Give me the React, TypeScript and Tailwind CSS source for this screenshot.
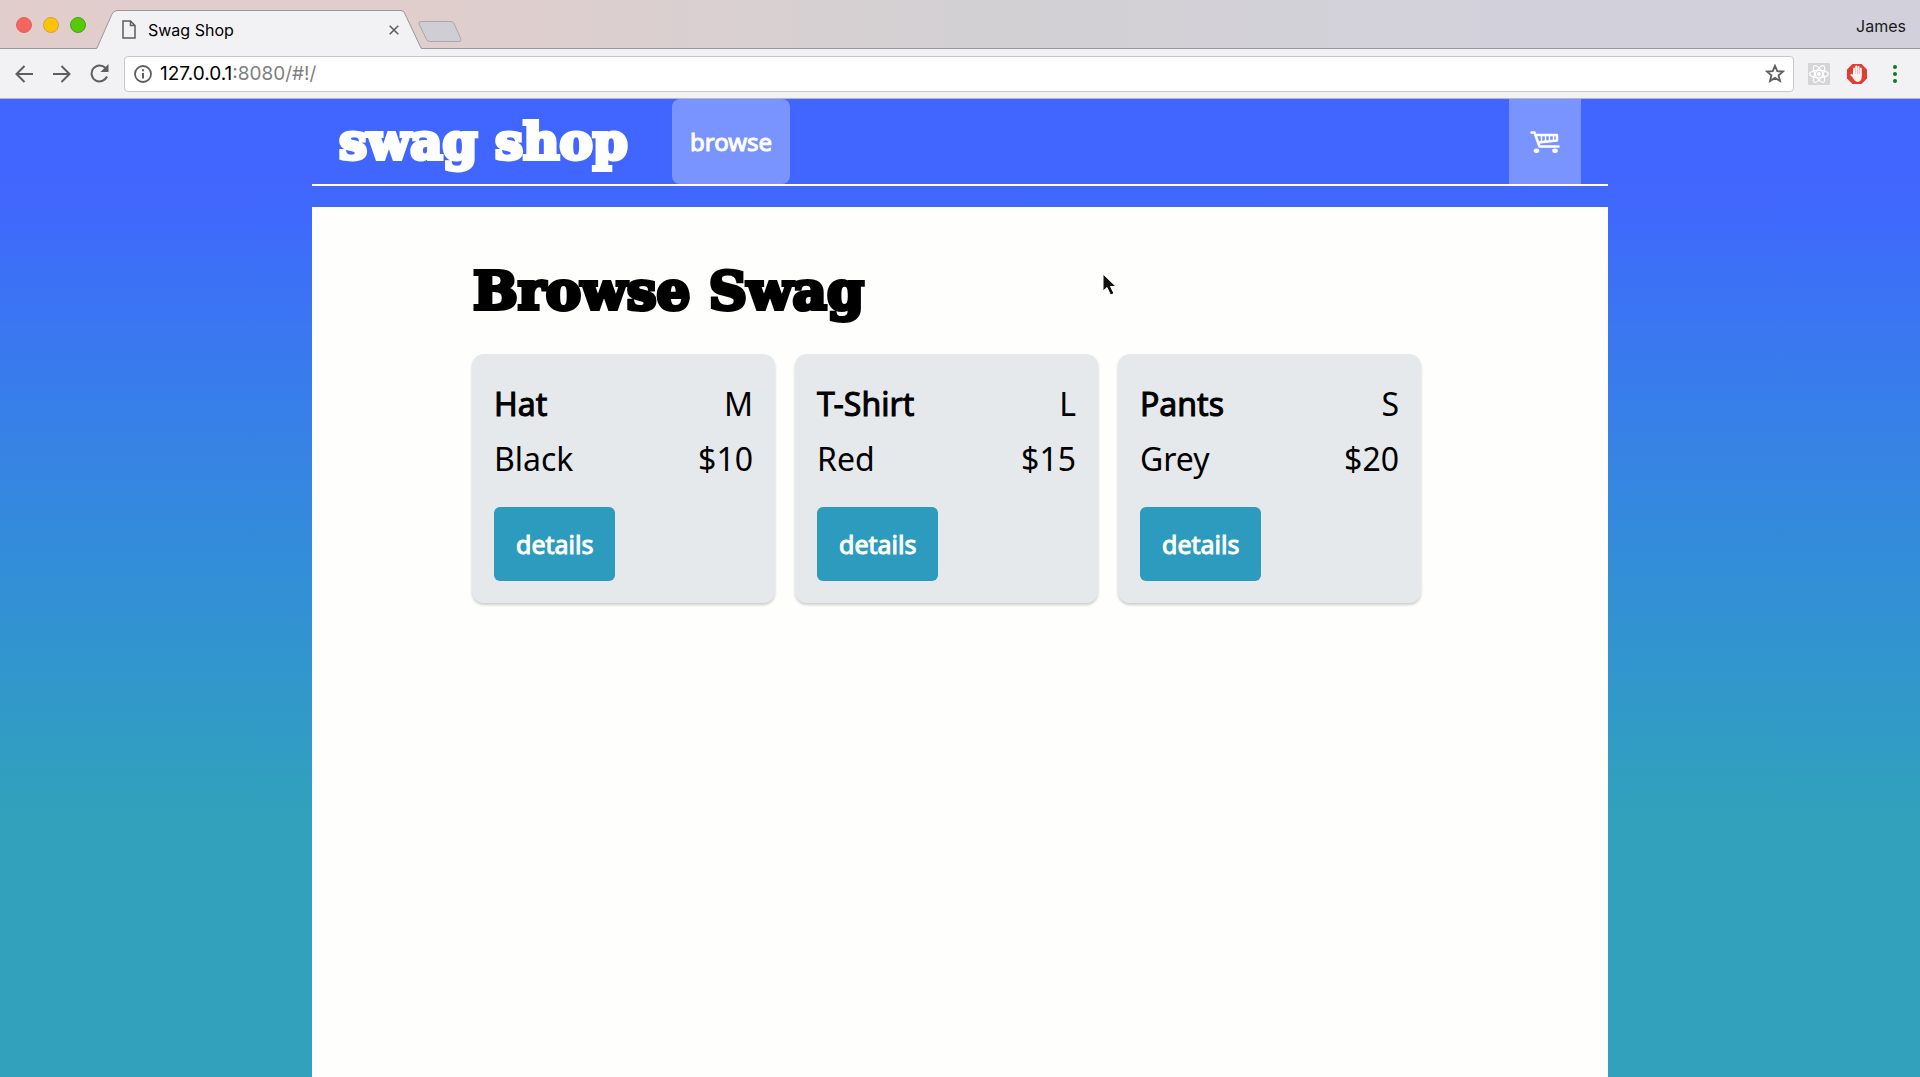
import { useState } from "react";

const products = [
  { name: "Hat", size: "M", color: "Black", price: "$10" },
  { name: "T-Shirt", size: "L", color: "Red", price: "$15" },
  { name: "Pants", size: "S", color: "Grey", price: "$20" },
];

const petals = [0, 60, 120];

function TabStrip() {
  return (
    <div className="relative flex h-[49px] items-end bg-linear-to-r from-[#e1cecc] from-20% via-[#d3d0d3] via-50% to-[#d2d1db] to-80%">
      <div className="absolute inset-x-0 bottom-0 h-px bg-[#9a979b]" />
      <div className="flex h-full w-[96px] items-center gap-[11px] pl-4">
        <button aria-label="Close window" className="size-4 rounded-full border border-[#e2615c] bg-[#f5655f]" />
        <button aria-label="Minimize window" className="size-4 rounded-full border border-[#dea123] bg-[#ffc20a]" />
        <button aria-label="Zoom window" className="size-4 rounded-full border border-[#44a516] bg-[#55cb05]" />
      </div>
      <div className="relative h-[39px] w-[326px]">
        <svg className="absolute inset-0 size-full" viewBox="0 0 326 39" preserveAspectRatio="none" aria-hidden="true">
          <path d="M0 39 L1 38 L16 4 Q18 1 21 1 H305 Q308 1 309 4 L325 38 L326 39 Z" fill="#f2f1f3" />
          <path d="M0 38.5 L1 38 L16 4 Q18 .5 21 .5 H305 Q308 .5 309 4 L325 38 L326 38.5" fill="none" stroke="#9a979b" />
        </svg>
        <div className="relative flex h-full items-center pl-[26px] pr-[23px]">
          <svg width="14" height="19" viewBox="0 0 14 19" fill="none" stroke="#5e5d60" strokeWidth="1.5" aria-hidden="true">
            <path d="M1 1H8.500L13 5.500V18H1Z M8.500 1V5.500H13" />
          </svg>
          <span className="ml-3 flex-1 text-base text-black">Swag Shop</span>
          <button aria-label="Close tab" className="text-[#5a5a5c]">
            <svg width="10" height="10" viewBox="0 0 10 10" stroke="currentColor" strokeWidth="1.5">
              <path d="M.7 .7L9.300 9.300M9.300 .7L.7 9.300" />
            </svg>
          </button>
        </div>
      </div>
      <button aria-label="New tab" className="mb-[6px] -ml-1">
        <svg width="45" height="22" viewBox="0 0 45 22">
          <path d="M3 .5H33Q35 .5 36 2.500L43 18Q43.500 20.500 41 20.500H12Q9.500 20.500 8.500 18.500L1 3Q.5 .5 3 .5Z" fill="#cfced4" stroke="#aaa7ab" />
        </svg>
      </button>
      <span className="mb-[11px] ml-auto pr-[14px] text-base text-[#1a1a1c]">James</span>
    </div>
  );
}

function Toolbar() {
  const [url, setUrl] = useState("127.0.0.1:8080/#!/");
  const host = url.split(":")[0];
  const rest = url.slice(host.length);
  return (
    <div className="flex h-[50px] items-center border-b border-[#b8b7c4] bg-[#f2f1f3] pl-[15px] pr-[23px] text-[#5e5d60]">
      <button aria-label="Back">
        <svg width="19" height="18" viewBox="0 0 19 18" fill="none" stroke="currentColor" strokeWidth="2">
          <path d="M18 9H2M9.500 1L1.500 9L9.500 17" />
        </svg>
      </button>
      <button aria-label="Forward" className="ml-[19px]">
        <svg width="19" height="18" viewBox="0 0 19 18" fill="none" stroke="currentColor" strokeWidth="2">
          <path d="M0 9H16M8.500 1L16.500 9L8.500 17" />
        </svg>
      </button>
      <button aria-label="Reload" className="ml-[18px]">
        <svg width="20" height="19" viewBox="0 0 20 19" fill="none">
          <path d="M15.500 4A8 8 0 1 0 17 12.500" stroke="currentColor" strokeWidth="2" />
          <path d="M18.500 0V8H10.500Z" fill="currentColor" />
        </svg>
      </button>
      <div className="ml-[14px] flex h-9 flex-1 items-center rounded-[4px] border border-[#c8c7ca] bg-white px-2">
        <svg width="20" height="20" viewBox="0 0 20 20" fill="none" stroke="currentColor" strokeWidth="1.800" aria-hidden="true">
          <circle cx="10" cy="10" r="8" />
          <path d="M10 9V14.500M10 5.300V7.300" strokeWidth="2" />
        </svg>
        <div className="relative ml-[7px] flex-1 text-[19px] leading-7">
          <div className="pointer-events-none absolute inset-0 text-[#7f7f81]" aria-hidden="true">
            <span className="text-black">{host}</span>
            {rest}
          </div>
          <input
            aria-label="Address"
            className="relative block w-full bg-transparent text-transparent caret-black outline-none"
            value={url}
            onChange={(e) => setUrl(e.target.value)}
          />
        </div>
        <button aria-label="Bookmark this page">
          <svg width="20" height="19" viewBox="0 0 20 19" fill="none" stroke="currentColor" strokeWidth="1.800">
            <path d="M10 1.800L12.300 7.200L18 7.600L13.600 11.300L15 17L10 13.900L5 17L6.400 11.300L2 7.600L7.700 7.200Z" />
          </svg>
        </button>
      </div>
      <button aria-label="React developer tools" className="ml-[14px]">
        <svg width="22" height="22" viewBox="0 0 22 22" fill="none">
          <rect width="22" height="22" rx="1" fill="#d5d5d7" />
          {petals.map((angle) => (
            <ellipse key={angle} cx="11" cy="11" rx="9.500" ry="3.700" stroke="#fff" strokeWidth="1.200" transform={`rotate(${angle} 11 11)`} />
          ))}
          <circle cx="11" cy="11" r="2" fill="#fff" />
        </svg>
      </button>
      <button aria-label="Ad blocker" className="ml-4">
        <svg width="22" height="22" viewBox="0 0 22 22">
          <path d="M6.500 1H15.500L21 6.500V15.500L15.500 21H6.500L1 15.500V6.500Z" fill="#e23b32" />
          <g fill="none" stroke="#f8f5f4" strokeWidth="2" strokeLinecap="round">
            <path d="M8 12V5.500M10.200 12V3.500M12.500 12V3.800M14.800 12V5.500M8.500 15L5.500 11.800" />
          </g>
          <path d="M7.200 11H15.700V14Q15.500 18.500 11.700 19Q9 19 7.500 16Z" fill="#f8f5f4" />
        </svg>
      </button>
      <button aria-label="Menu" className="ml-[25px]">
        <svg width="4" height="18" viewBox="0 0 4 18" fill="#0c7a26">
          <circle cx="2" cy="2" r="2" />
          <circle cx="2" cy="9" r="2" />
          <circle cx="2" cy="16" r="2" />
        </svg>
      </button>
    </div>
  );
}

function CartIcon() {
  return (
    <svg width="30" height="22" viewBox="0 0 30 22" fill="none" stroke="currentColor" strokeLinecap="round" strokeLinejoin="round" aria-hidden="true">
      <path d="M1.500 1.500H4.500L9.500 15.500H28.500" strokeWidth="2.500" />
      <path d="M6 4H27V9.500L8.500 11.500" strokeWidth="2.500" />
      <path d="M11.500 4V11M15.500 4V11M19.500 4V10.500M23.500 4V10" strokeWidth="1.500" />
      <ellipse cx="6.500" cy="19.800" rx="2.800" ry="2.200" fill="currentColor" stroke="none" />
      <ellipse cx="25" cy="19.800" rx="2.800" ry="2.200" fill="currentColor" stroke="none" />
    </svg>
  );
}

function Header() {
  return (
    <header className="mx-auto flex w-[67.5%] items-stretch border-b-2 border-white pl-[26px] pr-[27px] text-white">
      <a
        href="#!/"
        className="flex h-[85px] w-[334px] items-center pl-px font-['DejaVu_Serif',serif] text-[50px] font-bold whitespace-nowrap [-webkit-text-stroke:4px_white]"
      >
        swag shop
      </a>
      <a href="#!/browse" className="flex items-center rounded-lg bg-[#7a94ff] px-[18px] text-2xl [-webkit-text-stroke:1px_white]">
        browse
      </a>
      <button aria-label="Shopping cart" className="ml-auto flex w-[72px] items-center justify-center bg-[#7a94ff]">
        <CartIcon />
      </button>
    </header>
  );
}

function ProductCard({ product }: { product: (typeof products)[number] }) {
  return (
    <article className="w-[303px] rounded-xl bg-[#e6e9ec] px-[22px] pt-[22px] pb-[22px] text-[32px] leading-[55px] text-black shadow-[0_2px_3px_rgba(0,0,0,0.2)]">
      <div className="flex justify-between">
        <h2 className="[-webkit-text-stroke:1px_black]">{product.name}</h2>
        <span>{product.size}</span>
      </div>
      <div className="flex justify-between">
        <span>{product.color}</span>
        <span>{product.price}</span>
      </div>
      <button className="mt-[21px] block h-[74px] rounded-md bg-[#2d9bbd] px-[22px] text-[25px] text-white [-webkit-text-stroke:1px_white]">
        details
      </button>
    </article>
  );
}

function Pointer() {
  return (
    <svg className="absolute left-[57.400%] top-[273px]" width="16" height="24" viewBox="0 0 16 24" aria-hidden="true">
      <path d="M1 1V18L5 14.500L8.500 22L12 20.500L8.500 13.500H14Z" fill="#111" stroke="#fff" strokeWidth="1" />
    </svg>
  );
}

export default function App() {
  return (
    <div className="relative flex min-h-screen flex-col font-['Noto_Sans',sans-serif]">
      <div className="font-[Inter,sans-serif]">
        <TabStrip />
        <Toolbar />
      </div>
      <div className="flex flex-1 flex-col bg-linear-to-b from-[#4066ff] from-9% to-[#31a1bc] to-73%">
        <Header />
        <main className="mx-auto mt-[21px] w-[67.5%] flex-1 bg-[#fefefd] px-40 pt-[45px]">
          <h1 className="pl-px font-['DejaVu_Serif',serif] text-[53px] leading-[76px] font-bold whitespace-nowrap text-black [-webkit-text-stroke:4px_black]">
            Browse Swag
          </h1>
          <div className="mt-[26px] flex flex-wrap gap-5">
            {products.map((product) => (
              <ProductCard key={product.name} product={product} />
            ))}
          </div>
        </main>
      </div>
      <Pointer />
    </div>
  );
}
